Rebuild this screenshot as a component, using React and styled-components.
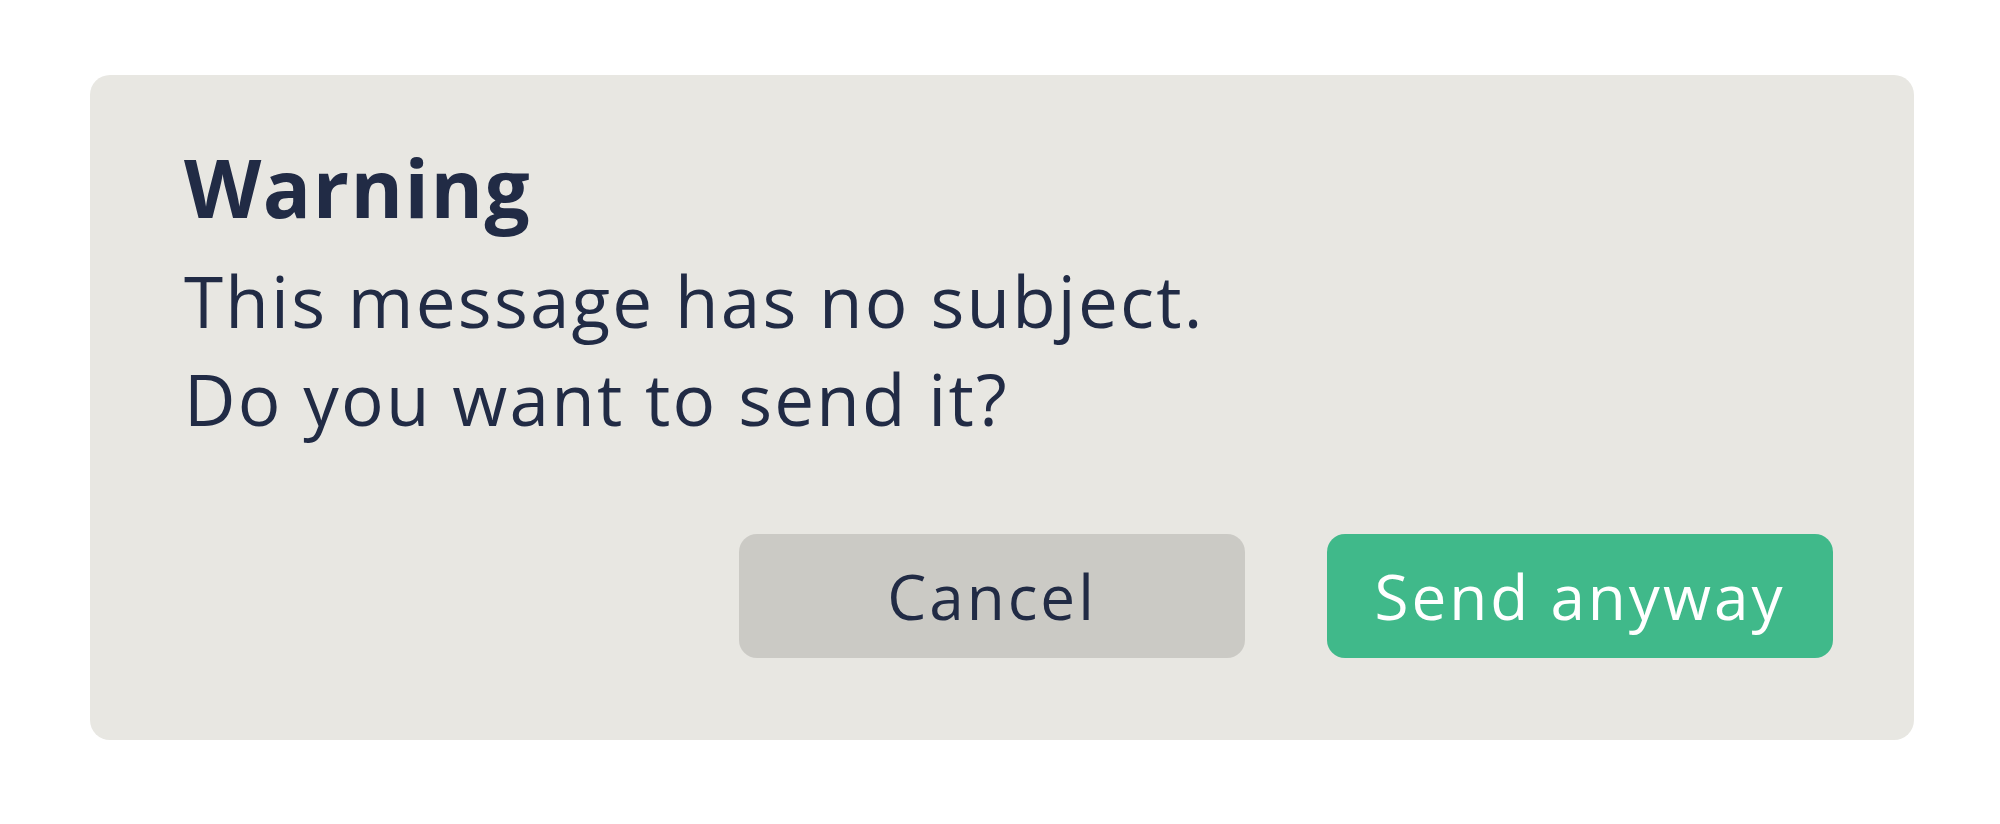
import React from "react";
import styled, { createGlobalStyle } from "styled-components";

const GlobalStyle = createGlobalStyle`
  html, body {
    margin: 0;
    padding: 0;
    background: #ffffff;
  }
  body {
    font-family: "Open Sans", "Liberation Sans", sans-serif;
  }
`;

const Page = styled.main`
  padding: 75px 86px 82px 90px;
`;

const Dialog = styled.section`
  background-color: #e8e7e2;
  border-radius: 20px;
  padding: 72px 81px 82px 94px;
  color: #212b45;
`;

const Title = styled.h2`
  margin: 0;
  font-size: 80px;
  line-height: 80px;
  font-weight: 700;
  letter-spacing: 1.5px;
`;

const Message = styled.p`
  margin: 25px 0 0;
  font-size: 71px;
  line-height: 98px;
  font-weight: 400;
  letter-spacing: 2.2px;
`;

const Actions = styled.div`
  display: flex;
  justify-content: flex-end;
  gap: 82px;
  margin-top: 86px;
`;

const Button = styled.button`
  width: 506px;
  height: 124px;
  border: none;
  border-radius: 18px;
  font-family: inherit;
  font-size: 62px;
  font-weight: 400;
  letter-spacing: 3px;
  cursor: pointer;
  background-color: ${(p) => (p.$primary ? "#40b98a" : "#cbcac5")};
  color: ${(p) => (p.$primary ? "#ffffff" : "#212b45")};
`;

const App = () => {
  return (
    <Page>
      <GlobalStyle />
      <Dialog>
        <Title>Warning</Title>
        <Message>
          This message has no subject.
          <br />
          Do you want to send it?
        </Message>
        <Actions>
          <Button>Cancel</Button>
          <Button $primary>Send anyway</Button>
        </Actions>
      </Dialog>
    </Page>
  );
};

export default App;
